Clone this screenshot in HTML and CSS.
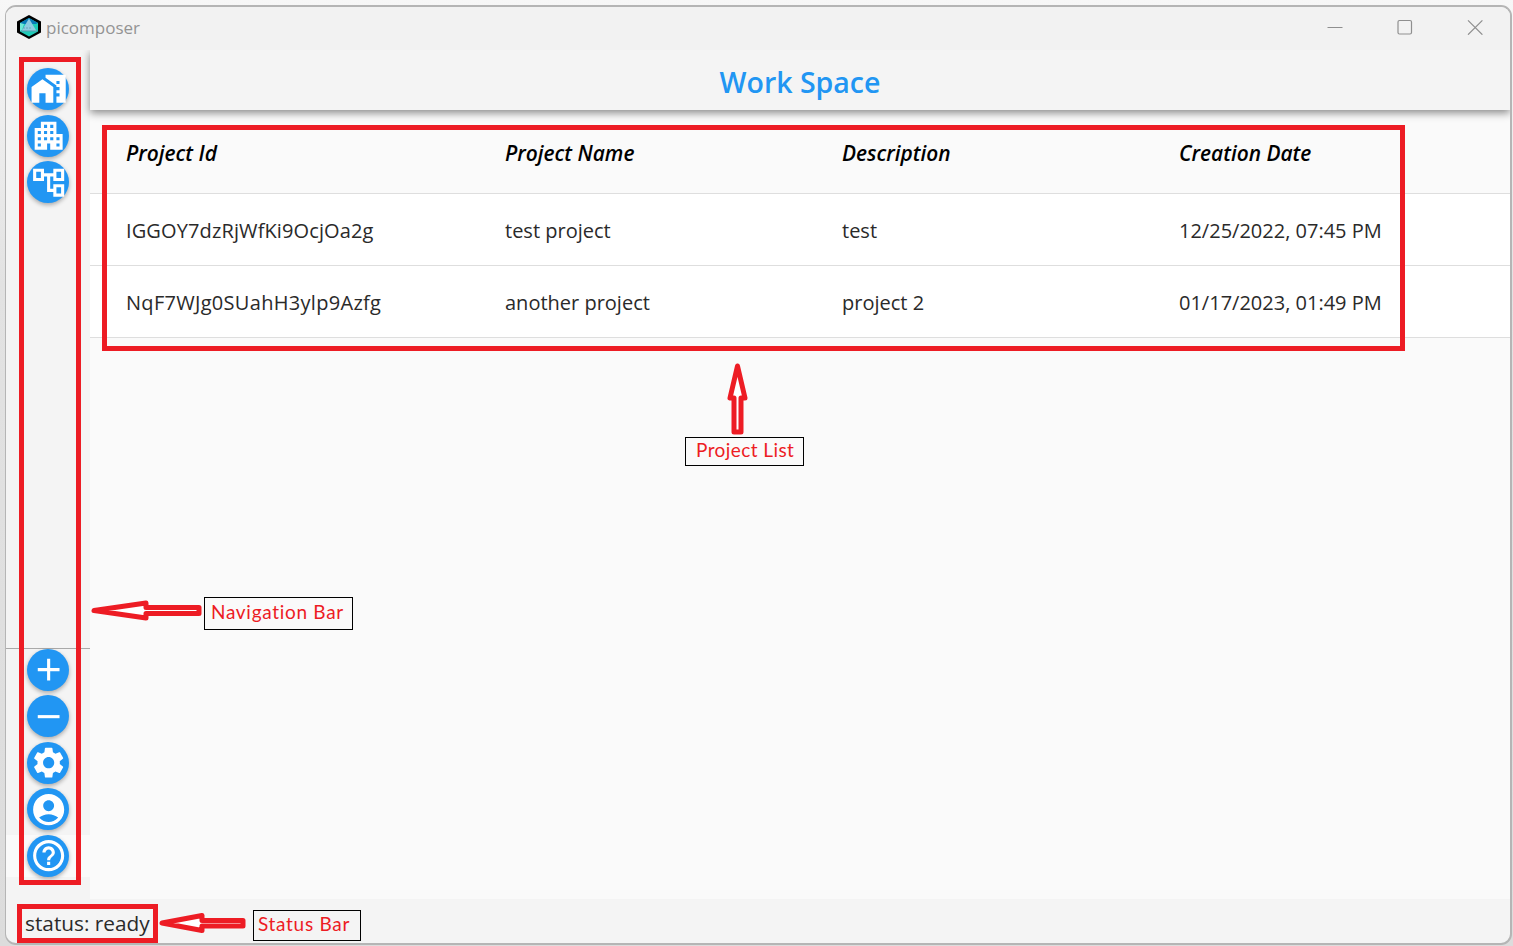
FILE: index.html
```html
<!DOCTYPE html>
<html lang="en">
<head>
<meta charset="utf-8">
<title>picomposer</title>
<link rel="stylesheet" href="styles.css">
</head>
<body>
<div class="window">
  <header class="titlebar">
    <svg class="logo" width="26" height="26" viewBox="0 0 26 26"><path d="M13 1 25 7.500v11L13 25 1 18.500v-11z" fill="#000"/><path d="M13 4 22 9v8.500L13 22.500 4 17.500V9z" fill="#1ecbb8"/><path d="M13 4 22 9 20 10H6L4 9z" fill="#0879b8"/><path d="M4 9 8 10 6 16 4 17z" fill="#6ee8d8"/><path d="M13 4.500 20.500 17h-15z" fill="#8ecbe2"/><path d="M5 17h16" stroke="#5b9dad" stroke-width="1"/><path d="M7.500 14h9" stroke="#477e92" stroke-width="1" stroke-dasharray="1 2"/></svg>
    <span class="app-name">picomposer</span>
    <div class="controls">
      <svg width="16" height="16" viewBox="0 0 16 16"><path d="M.5 8.500h15"/></svg>
      <svg width="16" height="16" viewBox="0 0 16 16"><rect x="1" y="1.500" width="13.500" height="13.500" rx="1.500"/></svg>
      <svg width="16" height="16" viewBox="0 0 16 16"><path d="m1 1.300 14.400 14.400M15.400 1.300 1 15.700"/></svg>
    </div>
  </header>
  <div class="body">
    <nav class="sidebar">
      <div class="group">
        <button class="fab"><svg viewBox="0 0 24 24"><path d="M1 11v10h5v-6h4v6h5V11L8 6z"/><path d="M10 3v1.970l7 5V11h2v2h-2v2h2v2h-2v4h6V3H10zm9 6h-2V7h2v2z"/></svg></button>
        <button class="fab"><svg viewBox="0 0 24 24"><path d="M17 11V3H7v4H3v14h8v-4h2v4h8V11h-4zM7 19H5v-2h2v2zm0-4H5v-2h2v2zm0-4H5V9h2v2zm4 4H9v-2h2v2zm0-4H9V9h2v2zm0-4H9V5h2v2zm4 8h-2v-2h2v2zm0-4h-2V9h2v2zm0-4h-2V5h2v2zm4 12h-2v-2h2v2zm0-4h-2v-2h2v2z"/></svg></button>
        <button class="fab"><svg viewBox="0 0 24 24"><path fill-rule="evenodd" d="M22 11V3h-7v3H9V3H2v8h7V8h2v10h4v3h7v-8h-7v3h-2V8h2v3h7zM7 9H4V5h3v4zm10 6h3v4h-3v-4zm0-10h3v4h-3V5z"/></svg></button>
      </div>
      <div class="group tools">
        <button class="fab"><svg viewBox="0 0 24 24"><path d="M19 13h-6v6h-2v-6H5v-2h6V5h2v6h6v2z"/></svg></button>
        <button class="fab"><svg viewBox="0 0 24 24"><path d="M19 13H5v-2h14v2z"/></svg></button>
        <button class="fab"><svg viewBox="0 0 24 24"><path d="M19.140 12.940c.04-.3.06-.61.06-.94 0-.32-.02-.64-.07-.94l2.030-1.580c.18-.14.23-.41.12-.61l-1.920-3.320c-.12-.22-.37-.29-.59-.22l-2.390.96c-.5-.38-1.030-.7-1.620-.94l-.36-2.540c-.04-.24-.24-.41-.48-.41h-3.840c-.24 0-.43.17-.47.41l-.36 2.540c-.59.24-1.130.57-1.620.94l-2.390-.96c-.22-.08-.47 0-.59.22L2.740 8.870c-.12.21-.08.47.12.61l2.030 1.580c-.05.3-.09.63-.09.94s.02.64.07.94l-2.030 1.580c-.18.14-.23.41-.12.61l1.920 3.320c.12.22.37.29.59.22l2.390-.96c.5.38 1.030.7 1.620.94l.36 2.540c.05.24.24.41.48.41h3.840c.24 0 .44-.17.47-.41l.36-2.540c.59-.24 1.130-.56 1.620-.94l2.390.96c.22.08.47 0 .59-.22l1.920-3.320c.12-.22.07-.47-.12-.61l-2.010-1.580zM12 15.600c-1.980 0-3.600-1.620-3.600-3.600s1.620-3.600 3.600-3.600 3.600 1.620 3.600 3.600-1.620 3.600-3.600 3.600z"/></svg></button>
        <button class="fab"><svg viewBox="0 0 24 24"><path d="M12 2C6.480 2 2 6.480 2 12s4.480 10 10 10 10-4.480 10-10S17.520 2 12 2zm0 4c1.930 0 3.500 1.570 3.500 3.500S13.930 13 12 13s-3.500-1.570-3.500-3.500S10.070 6 12 6zm0 14c-2.030 0-4.430-.82-6.140-2.880C7.550 15.800 9.680 15 12 15s4.450.8 6.140 2.120C16.430 19.180 14.030 20 12 20z"/></svg></button>
        <div class="help-row"><button class="fab"><svg viewBox="0 0 24 24"><path d="M11 18h2v-2h-2v2zm1-16C6.480 2 2 6.480 2 12s4.480 10 10 10 10-4.480 10-10S17.520 2 12 2zm0 18c-4.410 0-8-3.590-8-8s3.590-8 8-8 8 3.590 8 8-3.590 8-8 8zm0-14c-2.210 0-4 1.790-4 4h2c0-1.100.9-2 2-2s2 .9 2 2c0 2-3 1.750-3 5h2c0-2.250 3-2.500 3-5 0-2.210-1.790-4-4-4z"/></svg></button></div>
      </div>
    </nav>
    <main class="content">
      <h1 class="heading">Work Space</h1>
      <div class="row head"><i>Project Id</i><i>Project Name</i><i>Description</i><i>Creation Date</i></div>
      <div class="row"><span class="id-first">IGGOY7dzRjWfKi9OcjOa2g</span><span>test project</span><span>test</span><span>12/25/2022, 07:45 PM</span></div>
      <div class="row"><span class="id-second">NqF7WJg0SUahH3ylp9Azfg</span><span>another project</span><span>project 2</span><span>01/17/2023, 01:49 PM</span></div>
    </main>
  </div>
  <footer class="status">status: ready</footer>
</div>
<div class="mark mark-nav"></div>
<div class="mark mark-list"></div>
<div class="mark mark-status"></div>
<svg class="arrows" width="1513" height="946" viewBox="0 0 1513 946">
  <path d="M737.500 366 730 398h4v34h7v-34h4z"/>
  <path d="M94 610.500 146 603v4.500h53v6h-53v4.500z"/>
  <path d="M162 923 202 915.500v5h41v5.500h-41v4.500z"/>
</svg>
<div class="label label-list">Project List</div>
<div class="label label-nav">Navigation Bar</div>
<div class="label label-status">Status Bar</div>
</body>
</html>
```

FILE: styles.css
```css
* { box-sizing: border-box; }
body {
  margin: 0;
  width: 1513px;
  height: 946px;
  padding: 5px 1px 1px 5px;
  overflow: hidden;
  position: relative;
  background: linear-gradient(#f7f7f7, #e2e2e2 30%, #dcdcdc);
  font-family: "Open Sans", "Noto Sans", sans-serif;
  color: #2a2a2a;
}
.window {
  display: flex;
  flex-direction: column;
  height: 940px;
  border: 2px solid #b5b5b5;
  border-left-width: 1px;
  border-radius: 11px;
  overflow: hidden;
  background: #f4f4f4;
}
.titlebar {
  display: flex;
  align-items: center;
  height: 43px;
  flex: none;
  padding: 0 27px 3px 10px;
  background: #f2f2f2;
}
.app-name { margin-left: 4px; font-size: 17px; color: #949494; }
.controls { display: flex; gap: 54px; margin-left: auto; }
.controls svg { fill: none; stroke: #8f8f8f; stroke-width: 1.2; }
.body { display: flex; flex: 1; min-height: 0; }
.sidebar {
  width: 84px;
  flex: none;
  display: flex;
  flex-direction: column;
  justify-content: space-between;
  padding: 18px 0 22px;
  background: #f4f4f4;
}
.group { display: flex; flex-direction: column; gap: 4.600px; padding-left: 21px; }
.tools { border-top: 1px solid #a9a9a9; }
.help-row { margin-left: -21px; padding-left: 21px; background: #fafafa; height: 42px; }
.fab {
  width: 42px;
  height: 42px;
  flex: none;
  display: flex;
  align-items: center;
  justify-content: center;
  padding: 0 0 0 1px;
  border: 0;
  border-radius: 50%;
  background: #2196f3;
  box-shadow: 0 2px 4px rgba(0, 0, 0, .3);
}
.fab svg { width: 37.300px; height: 37.300px; flex: none; fill: #fff; }
.content { flex: 1; background: #fafafa; }
.heading {
  display: flex;
  align-items: center;
  justify-content: center;
  height: 60px;
  margin: 0;
  padding: 4px 0 0;
  background: #f4f4f4;
  box-shadow: 0 3px 8px rgba(0, 0, 0, .45);
  clip-path: inset(0 0 -20px -20px);
  font-size: 28.500px;
  font-weight: 600;
  color: #2196f3;
}
.row {
  display: grid;
  grid-template-columns: 379px 337px 337px 1fr;
  align-items: center;
  height: 72px;
  padding: 2px 0 0 36px;
  background: #fff;
  border-bottom: 1px solid #dedede;
  font-size: 20px;
  white-space: nowrap;
}
.head { height: 84px; background: #fafafa; color: #000; font-weight: 600; font-size: 20.900px; }
.id-first { letter-spacing: .12px; }
.id-second { letter-spacing: .3px; }
.status { display: flex; align-items: center; height: 44px; padding: 4px 0 0 19px; font-size: 20.800px; }
.mark { position: absolute; border: 5px solid #ed1c24; }
.mark-nav { left: 19px; top: 57px; width: 62px; height: 828px; }
.mark-list { left: 102px; top: 125px; width: 1303px; height: 226px; }
.mark-status { left: 17px; top: 904px; width: 141px; height: 39px; }
.arrows { position: absolute; left: 0; top: 0; fill: #fff; stroke: #ed1c24; stroke-width: 5; stroke-linejoin: round; }
.label {
  position: absolute;
  display: flex;
  align-items: center;
  padding-bottom: 4px;
  border: 1px solid #000;
  font: 19px Lato, sans-serif;
  letter-spacing: .7px;
  color: #ed1c24;
  white-space: nowrap;
}
.label-list { left: 685px; top: 437px; width: 119px; height: 29px; padding-left: 10px; letter-spacing: .42px; }
.label-nav { left: 204px; top: 597px; width: 149px; height: 33px; padding-left: 6px; }
.label-status { left: 253px; top: 910px; width: 108px; height: 31px; padding-left: 4px; }
```
